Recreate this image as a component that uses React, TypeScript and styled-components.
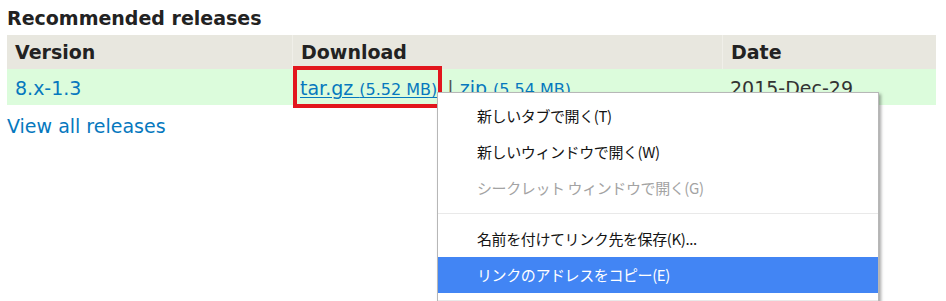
import React from 'react'
import styled, { createGlobalStyle } from 'styled-components'

const GlobalStyle = createGlobalStyle`
    html, body {
        margin: 0;
        padding: 0;
        background: #ffffff;
        overflow: hidden;
    }
`

const Page = styled.div`
    position: relative;
    width: 946px;
    height: 301px;
    padding: 0 10px 0 7px;
    box-sizing: border-box;
    font-family: "DejaVu Sans", Verdana, sans-serif;
    color: #222222;
`

const Title = styled.h2`
    margin: 0;
    padding-top: 5px;
    height: 30px;
    font-size: 19px;
    font-weight: bold;
    line-height: 26px;
`

const Table = styled.div`
    display: grid;
    grid-template-columns: 285px 430px 1fr;
    width: 929px;
`

const HeadCell = styled.div`
    height: 34px;
    padding-left: 8px;
    background: #e8e7df;
    font-size: 19px;
    font-weight: bold;
    line-height: 34px;
    color: #222222;
    & + & {
        border-left: 1px solid #f0efe9;
    }
`

const Cell = styled.div`
    height: 36px;
    padding-left: 8px;
    background: #dcfcdc;
    font-size: 19px;
    line-height: 38px;
    white-space: nowrap;
    color: #333333;
`

const Link = styled.a<{ $underline?: boolean }>`
    color: #0678be;
    text-decoration: ${p => (p.$underline ? 'underline' : 'none')};
    text-underline-offset: 2px;
`

const Size = styled.span`
    font-size: 16px;
`

const Divider = styled.span`
    color: #555555;
    margin: 0 6px 0 10px;
`

const Marked = styled.span`
    position: relative;
    &::after {
        content: '';
        position: absolute;
        left: -7px;
        right: -5px;
        top: -11px;
        bottom: -9px;
        border: 4px solid #e2161d;
    }
`

const AllLink = styled.a`
    display: block;
    margin-top: 10px;
    font-size: 19px;
    color: #0678be;
    text-decoration: none;
`

const Menu = styled.ul`
    position: absolute;
    left: 437px;
    top: 92px;
    width: 440px;
    margin: 0;
    padding: 5px 0;
    list-style: none;
    background: #ffffff;
    border: 1px solid #b7b7b7;
    box-shadow: 2px 2px 3px rgba(0, 0, 0, 0.35);
    font-family: "Noto Sans CJK JP", "Noto Sans", sans-serif;
    font-size: 15px;
    letter-spacing: -0.4px;
`

const MenuItem = styled.li<{ $disabled?: boolean; $active?: boolean }>`
    height: 36px;
    padding-left: 39px;
    line-height: 36px;
    color: ${p => (p.$active ? '#ffffff' : p.$disabled ? '#a3a3a3' : '#141414')};
    background: ${p => (p.$active ? '#4285f4' : 'transparent')};
    white-space: nowrap;
`

const Separator = styled.li`
    height: 1px;
    margin: 7px 0;
    background: #e9e9e9;
`

export default function App() {
    return (
        <Page>
            <GlobalStyle />
            <Title>Recommended releases</Title>
            <Table>
                <HeadCell>Version</HeadCell>
                <HeadCell>Download</HeadCell>
                <HeadCell>Date</HeadCell>
                <Cell><Link href="#">8.x-1.3</Link></Cell>
                <Cell>
                    <Marked>
                        <Link href="#" $underline>tar.gz <Size>(5.52 MB)</Size></Link>
                    </Marked>
                    <Divider>|</Divider>
                    <Link href="#">zip <Size>(5.54 MB)</Size></Link>
                </Cell>
                <Cell>2015-Dec-29</Cell>
            </Table>
            <AllLink href="#">View all releases</AllLink>
            <Menu>
                <MenuItem>新しいタブで開く(T)</MenuItem>
                <MenuItem>新しいウィンドウで開く(W)</MenuItem>
                <MenuItem $disabled>シークレット ウィンドウで開く(G)</MenuItem>
                <Separator />
                <MenuItem>名前を付けてリンク先を保存(K)...</MenuItem>
                <MenuItem $active>リンクのアドレスをコピー(E)</MenuItem>
                <Separator />
            </Menu>
        </Page>
    )
}
